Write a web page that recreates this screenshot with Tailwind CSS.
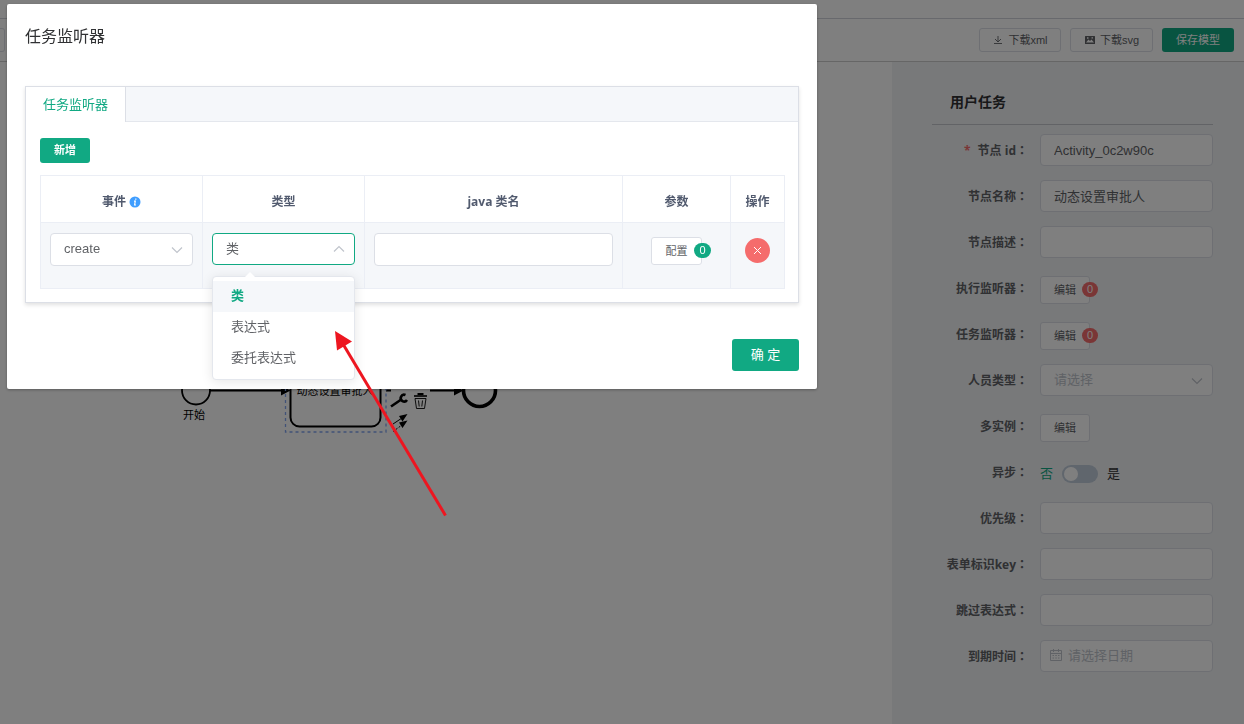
<!DOCTYPE html>
<html lang="zh-CN">

<head>
  <meta charset="UTF-8" />
  <meta name="viewport" content="width=device-width, initial-scale=1" />
  <title>流程设计器 - 任务监听器</title>
  <script src="https://cdn.jsdelivr.net/npm/@tailwindcss/browser@4"></script>
</head>

<body class="min-h-screen flex flex-col bg-white text-[13px] text-[#606266] font-['Liberation_Sans','Noto_Sans_CJK_SC',sans-serif] overflow-hidden">

  <!-- 顶部栏 -->
  <div class="h-[19px] border-b border-[#d0d3da] shrink-0"></div>

  <!-- 工具栏 -->
  <header class="h-[43px] border-b border-[#ccc] flex items-center justify-between pr-[10px] shrink-0">
    <button type="button" aria-label="更多" class="w-[5px] h-6 border border-l-0 border-[#dcdfe6] rounded-r-[3px]"></button>
    <div class="flex gap-[9px] text-[11px] leading-none">
      <button type="button" class="w-[82px] h-6 border border-[#dcdfe6] rounded-[3px] flex items-center justify-center gap-1">
        <svg class="w-3 h-3" viewBox="0 0 12 12" fill="none" stroke="currentColor">
          <path d="M6 2V7.500M3 5L6 8L9 5M2 9.500H10" stroke-width="0.900" />
        </svg>
        下载xml
      </button>
      <button type="button" class="w-[83px] h-6 border border-[#dcdfe6] rounded-[3px] flex items-center justify-center gap-1">
        <svg class="w-3 h-3" viewBox="0 0 12 12">
          <path fill="currentColor" fill-rule="evenodd" d="M1.500 2H10.500Q11 2 11 2.500V9.500Q11 10 10.500 10H1.500Q1 10 1 9.500V2.500Q1 2 1.500 2ZM2 8.500H10L7.500 5.500L6 7L4.500 5.500ZM3 3.300H4.500V4.700H3ZM7.500 3.300H9V4.500H7.500Z" />
        </svg>
        下载svg
      </button>
      <button type="button" class="w-[72px] h-6 bg-[#11a983] text-white rounded-[3px]">保存模型</button>
    </div>
  </header>

  <main class="flex flex-1">
    <!-- 画布 -->
    <section class="relative flex-1 overflow-hidden">
      <svg class="absolute left-0 top-0 w-[892px] h-[662px]" viewBox="0 62 892 662" fill="none" stroke="#000">
        <circle cx="196" cy="390.500" r="14" stroke-width="1.800" />
        <path d="M210 390.500H283M386 390.500H391M430 390.500H456" stroke-width="1.800" />
        <path d="M281 385.500L290.500 390.500L281 395.500ZM454 385.500L463.500 390.500L454 395.500Z" fill="#000" stroke="none" />
        <rect x="290.500" y="355" width="90" height="71.500" rx="9" stroke-width="2" />
        <rect x="285.500" y="350" width="100.500" height="82" stroke="#82a5f0" stroke-width="1.300" stroke-dasharray="3 3" />
        <circle cx="479.500" cy="390.500" r="16" stroke-width="3.600" />
        <g class="text-[11px]" fill="#000" stroke="none" text-anchor="middle">
          <text x="194" y="419">开始</text>
          <text x="335" y="395">动态设置审批人</text>
        </g>
        <!-- 快捷操作 -->
        <path d="M391 406.500L400.500 400" stroke-width="2.600" />
        <path d="M405.500 395A3.400 3.400 0 1 0 407 400" stroke-width="2.600" />
        <path d="M414 396H427" stroke-width="1.600" />
        <path d="M417.500 394H423.500" stroke-width="2" />
        <path d="M415 398.500L416.500 408.500H424.500L426 398.500ZM418.500 400.500L419.200 406.500M422.500 400.500L421.800 406.500" stroke-width="0.900" />
        <path d="M393 424L402 418" />
        <path d="M393 431.500L402 425" stroke-dasharray="2 1.500" />
        <path d="M399 416L407.500 414L402.500 421.500ZM399 422.500L407.500 420.500L402.500 428Z" fill="#000" stroke="none" />
      </svg>
    </section>

    <!-- 属性面板 -->
    <aside class="w-[352px] shrink-0 bg-[#f0f2f5] pl-10 pr-[31px] pt-5">
      <h2 class="h-[43px] leading-10 pl-[18px] border-b border-[#c4c6cc] text-sm font-bold text-[#303133]">用户任务</h2>
      <form class="mt-[9px] flex flex-col gap-[14px]">
        <div class="flex h-8 items-center">
          <label for="node-id" class="w-24 mr-3 text-right text-xs font-bold font-['Open_Sans','Noto_Sans_CJK_SC',sans-serif]"><span class="text-[#f56c6c] mr-1">*</span> 节点 id<span lang="zh-TW" class="font-['Noto_Sans_CJK_TC']">：</span></label>
          <input id="node-id" type="text" value="Activity_0c2w90c" class="flex-1 min-w-0 h-8 px-[13px] bg-white border border-[#dcdfe6] rounded" />
        </div>
        <div class="flex h-8 items-center">
          <label for="node-name" class="w-24 mr-3 text-right text-xs font-bold">节点名称<span lang="zh-TW" class="font-['Noto_Sans_CJK_TC']">：</span></label>
          <input id="node-name" type="text" value="动态设置审批人" class="flex-1 min-w-0 h-8 px-[13px] pb-[2px] bg-white border border-[#dcdfe6] rounded" />
        </div>
        <div class="flex h-8 items-center">
          <label for="node-desc" class="w-24 mr-3 text-right text-xs font-bold">节点描述<span lang="zh-TW" class="font-['Noto_Sans_CJK_TC']">：</span></label>
          <input id="node-desc" type="text" class="flex-1 min-w-0 h-8 px-[13px] bg-white border border-[#dcdfe6] rounded" />
        </div>
        <div class="flex h-8 items-center">
          <label for="exec-listener" class="w-24 mr-3 text-right text-xs font-bold">执行监听器<span lang="zh-TW" class="font-['Noto_Sans_CJK_TC']">：</span></label>
          <div class="relative self-end">
            <button id="exec-listener" type="button" class="block w-[50px] h-7 bg-white border border-[#dcdfe6] rounded-[3px] text-[11px]">编辑</button>
            <span class="absolute left-[42px] top-[6px] w-4 h-[15px] rounded-full bg-[#f56c6c] text-white text-[11px] leading-[15px] text-center">0</span>
          </div>
        </div>
        <div class="flex h-8 items-center">
          <label for="task-listener" class="w-24 mr-3 text-right text-xs font-bold">任务监听器<span lang="zh-TW" class="font-['Noto_Sans_CJK_TC']">：</span></label>
          <div class="relative self-end">
            <button id="task-listener" type="button" class="block w-[50px] h-7 bg-white border border-[#dcdfe6] rounded-[3px] text-[11px]">编辑</button>
            <span class="absolute left-[42px] top-[6px] w-4 h-[15px] rounded-full bg-[#f56c6c] text-white text-[11px] leading-[15px] text-center">0</span>
          </div>
        </div>
        <div class="flex h-8 items-center">
          <label for="user-type" class="w-24 mr-3 text-right text-xs font-bold">人员类型<span lang="zh-TW" class="font-['Noto_Sans_CJK_TC']">：</span></label>
          <div class="relative flex-1">
            <select id="user-type" class="block appearance-none w-full h-8 px-[13px] bg-white border border-[#dcdfe6] rounded text-[#c0c4cc]">
              <option>请选择</option>
            </select>
            <svg class="absolute right-[10px] top-[11px] w-3 h-3 pointer-events-none" viewBox="0 0 12 12" fill="none" stroke="#c0c4cc" stroke-width="1.200"><path d="M1 3.500L6 8.500L11 3.500" /></svg>
          </div>
        </div>
        <div class="flex h-8 items-center">
          <label for="multi-instance" class="w-24 mr-3 text-right text-xs font-bold">多实例<span lang="zh-TW" class="font-['Noto_Sans_CJK_TC']">：</span></label>
          <button id="multi-instance" type="button" class="self-end w-[50px] h-7 bg-white border border-[#dcdfe6] rounded-[3px] text-[11px]">编辑</button>
        </div>
        <div class="flex h-8 items-center">
          <label for="async" class="w-24 mr-3 text-right text-xs font-bold">异步<span lang="zh-TW" class="font-['Noto_Sans_CJK_TC']">：</span></label>
          <div class="flex items-center self-end h-7">
            <span class="text-[#11a983]">否</span>
            <input id="async" type="checkbox" role="switch" class="appearance-none mx-[9px] w-9 h-[18px] rounded-full bg-[#c0ccda] before:block before:w-[14px] before:h-[14px] before:m-[2px] before:rounded-full before:bg-white" />
            <span class="text-[#303133]">是</span>
          </div>
        </div>
        <div class="flex h-8 items-center">
          <label for="priority" class="w-24 mr-3 text-right text-xs font-bold">优先级<span lang="zh-TW" class="font-['Noto_Sans_CJK_TC']">：</span></label>
          <input id="priority" type="text" class="flex-1 min-w-0 h-8 px-[13px] bg-white border border-[#dcdfe6] rounded" />
        </div>
        <div class="flex h-8 items-center">
          <label for="form-key" class="w-24 mr-3 text-right text-xs font-bold font-['Open_Sans','Noto_Sans_CJK_SC',sans-serif]">表单标识key<span lang="zh-TW" class="font-['Noto_Sans_CJK_TC']">：</span></label>
          <input id="form-key" type="text" class="flex-1 min-w-0 h-8 px-[13px] bg-white border border-[#dcdfe6] rounded" />
        </div>
        <div class="flex h-8 items-center">
          <label for="skip-expr" class="w-24 mr-3 text-right text-xs font-bold">跳过表达式<span lang="zh-TW" class="font-['Noto_Sans_CJK_TC']">：</span></label>
          <input id="skip-expr" type="text" class="flex-1 min-w-0 h-8 px-[13px] bg-white border border-[#dcdfe6] rounded" />
        </div>
        <div class="flex h-8 items-center">
          <label for="due-date" class="w-24 mr-3 text-right text-xs font-bold">到期时间<span lang="zh-TW" class="font-['Noto_Sans_CJK_TC']">：</span></label>
          <div class="relative flex-1">
            <input id="due-date" type="text" placeholder="请选择日期" class="block w-full h-8 pl-[27px] pr-3 pb-[2px] bg-white border border-[#dcdfe6] rounded placeholder:text-[#c0c4cc]" />
            <svg class="absolute left-[9px] top-[8px] w-[14px] h-[14px]" viewBox="0 0 14 14" fill="none" stroke="#c0c4cc">
              <path d="M1.500 2.500H12.500V12.500H1.500ZM1.500 5.500H12.500M4.500 1V4M9.500 1V4M3.500 7.500H5M6.300 7.500H7.800M9 7.500H10.500M3.500 10H5M6.300 10H7.800M9 10H10.500" />
            </svg>
          </div>
        </div>
      </form>
    </aside>
  </main>

  <!-- 弹窗 -->
  <div class="fixed inset-0 bg-black/50">
    <div role="dialog" aria-labelledby="dialog-title" class="ml-[7px] mt-1 w-[810px] bg-white rounded-[2px] shadow-[0_1px_3px_rgba(0,0,0,0.3)] px-[18px] pt-[21px] pb-[18px]">
      <h1 id="dialog-title" class="text-base leading-6 text-[#303133]">任务监听器</h1>

      <div class="mt-[37px] border border-[#dcdfe6] shadow-[0_2px_4px_rgba(0,0,0,0.12)]">
        <div class="bg-[#f5f7fa] border-b border-[#e4e7ed]">
          <button type="button" class="block w-[100px] h-[35px] -mb-px bg-white border-r border-[#dcdfe6] text-[#11a983]">任务监听器</button>
        </div>
        <div class="pl-[14px] pr-[13px] pt-4 pb-[13px]">
          <button type="button" class="block w-[50px] h-[25px] bg-[#11a983] text-white rounded-[3px] text-[11px] font-bold">新增</button>

          <table class="mt-3 w-full table-fixed border-collapse">
            <colgroup>
              <col class="w-[162px]" />
              <col class="w-[162px]" />
              <col />
              <col class="w-[108px]" />
              <col class="w-[54px]" />
            </colgroup>
            <thead class="font-['Open_Sans','Noto_Sans_CJK_SC',sans-serif]">
              <tr class="h-[47px] text-xs text-[#515a6e]">
                <th class="border border-[#ebeef5] pt-[6px]">
                  事件
                  <svg class="inline w-3 h-3 -mt-[2px]" viewBox="0 0 12 12">
                    <circle cx="6" cy="6" r="5.500" fill="#409eff" />
                    <path d="M6.800 2.400V3.800M5 5.200H6.300L5.600 9H7" fill="none" stroke="#fff" stroke-width="1.200" />
                  </svg>
                </th>
                <th class="border border-[#ebeef5] pt-[6px]">类型</th>
                <th class="border border-[#ebeef5] pt-[6px]">java 类名</th>
                <th class="border border-[#ebeef5] pt-[6px]">参数</th>
                <th class="border border-[#ebeef5] pt-[6px]">操作</th>
              </tr>
            </thead>
            <tbody>
              <tr class="h-[66px] bg-[#f5f7fa] align-top">
                <td class="border border-[#ebeef5] px-[9px] pt-[10px]">
                  <div class="relative">
                    <select aria-label="事件" class="block appearance-none w-full h-[33px] px-[13px] pb-[2px] bg-white border border-[#dcdfe6] rounded">
                      <option>create</option>
                    </select>
                    <svg class="absolute right-[10px] top-[11px] w-3 h-3 pointer-events-none" viewBox="0 0 12 12" fill="none" stroke="#c0c4cc" stroke-width="1.200"><path d="M1 3.500L6 8.500L11 3.500" /></svg>
                  </div>
                </td>
                <td class="border border-[#ebeef5] px-[9px] pt-[10px]">
                  <div class="relative">
                    <select aria-label="类型" class="block appearance-none w-full h-8 px-[13px] bg-white border border-[#11a983] rounded">
                      <option>类</option>
                    </select>
                    <svg class="absolute right-[10px] top-[10px] w-3 h-3 pointer-events-none" viewBox="0 0 12 12" fill="none" stroke="#c0c4cc" stroke-width="1.200"><path d="M1 8.500L6 3.500L11 8.500" /></svg>
                    <!-- 类型下拉选项 -->
                    <div class="absolute left-0 top-[43px] z-10 w-full pt-1 pb-[5px] bg-white border border-[#e4e7ed] rounded shadow-[0_2px_12px_rgba(0,0,0,0.1)]">
                      <svg class="absolute left-[31px] -top-[5px] w-3 h-[6px]" viewBox="0 0 12 6"><path d="M0 6L6 0L12 6Z" fill="#fff" /></svg>
                      <ul class="leading-[31px]">
                        <li class="pl-[18px] h-[31px] leading-[29px] bg-[#f5f7fa] text-[#11a983] font-bold">类</li>
                        <li class="pl-[18px] h-[31px] leading-[29px]">表达式</li>
                        <li class="pl-[18px] h-[31px] leading-[29px]">委托表达式</li>
                      </ul>
                    </div>
                  </div>
                </td>
                <td class="border border-[#ebeef5] px-[9px] pt-[10px]">
                  <input type="text" aria-label="java 类名" class="block w-full h-[33px] px-[13px] bg-white border border-[#dcdfe6] rounded" />
                </td>
                <td class="border border-[#ebeef5] pt-[14px]">
                  <div class="relative w-[51px] mx-auto">
                    <button type="button" class="block w-full h-7 bg-white border border-[#dcdfe6] rounded-[3px] text-[11px]">配置</button>
                    <span class="absolute left-[43px] top-[6px] w-[17px] h-[15px] rounded-full bg-[#11a983] text-white text-[11px] leading-[15px] text-center">0</span>
                  </div>
                </td>
                <td class="border border-[#ebeef5] pt-[15px]">
                  <button type="button" aria-label="删除" class="flex items-center justify-center mx-auto w-[25px] h-[25px] rounded-full bg-[#f56c6c]">
                    <svg class="w-[9px] h-[9px]" viewBox="0 0 9 9" fill="none" stroke="#fff"><path d="M1 1L8 8M8 1L1 8" /></svg>
                  </button>
                </td>
              </tr>
            </tbody>
          </table>
        </div>
      </div>

      <div class="mt-9 flex justify-end">
        <button type="button" class="w-[67px] h-8 bg-[#11a983] text-white rounded-[3px]">确 定</button>
      </div>
    </div>

    <!-- 指向下拉框的箭头 -->
    <svg class="absolute left-[330px] top-[325px] z-20 w-[120px] h-[195px] pointer-events-none" viewBox="330 325 120 195">
      <path d="M343 344L445.500 515.500" stroke="#ed1620" stroke-width="3" />
      <path d="M335 331L352 341.500L337 350.500Z" fill="#ed1620" />
    </svg>
  </div>

</body>
</html>
